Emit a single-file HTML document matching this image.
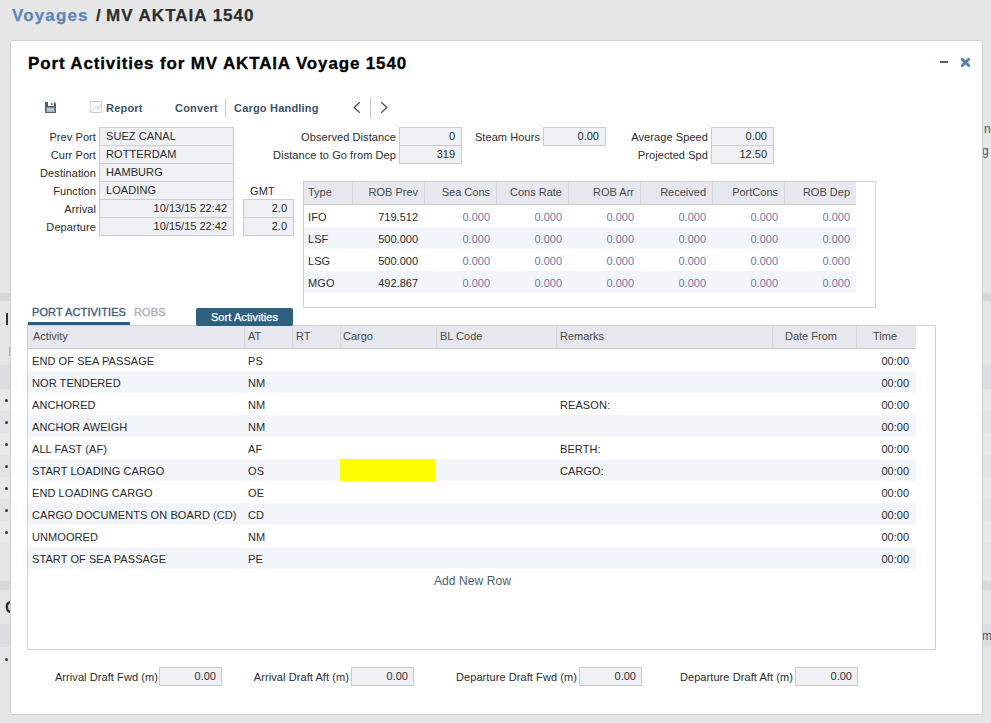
<!DOCTYPE html>
<html><head><meta charset="utf-8"><style>
*{box-sizing:border-box;margin:0;padding:0}
html,body{width:991px;height:723px;overflow:hidden;background:#e6e6e6;font-family:"Liberation Sans",sans-serif;font-size:11px;color:#222}
.t{position:absolute;white-space:nowrap;font-size:11px;line-height:13px;letter-spacing:0.08px}
.rc{position:absolute}
.bx{position:absolute;background:#eff0f3;border:1px solid #cbccce}
.h18{font-size:17px;font-weight:bold;line-height:20px;letter-spacing:0.85px;-webkit-text-stroke:0.25px currentColor}
.tb{font-size:11px;line-height:13px;font-weight:bold;color:#3c5369;letter-spacing:0.2px}
.lb{color:#2b2b2b}
.hd{color:#4a4a4a;letter-spacing:0}
.bl{color:#7476a6;letter-spacing:0}
.n{letter-spacing:0}
</style></head><body>
<div class="rc" style="left:0px;top:293px;width:991px;height:8px;background:#d6d6d9;"></div>
<div class="rc" style="left:0px;top:365px;width:991px;height:24px;background:#dcdce2;"></div>
<div class="rc" style="left:0px;top:389px;width:991px;height:22px;background:#e9e9e9;"></div>
<div class="rc" style="left:0px;top:411px;width:991px;height:22px;background:#e3e3e5;"></div>
<div class="rc" style="left:0px;top:433px;width:991px;height:22px;background:#e9e9e9;"></div>
<div class="rc" style="left:0px;top:455px;width:991px;height:22px;background:#e3e3e5;"></div>
<div class="rc" style="left:0px;top:477px;width:991px;height:22px;background:#e9e9e9;"></div>
<div class="rc" style="left:0px;top:499px;width:991px;height:22px;background:#e3e3e5;"></div>
<div class="rc" style="left:0px;top:521px;width:991px;height:22px;background:#e9e9e9;"></div>
<div class="rc" style="left:0px;top:581px;width:991px;height:9px;background:#d9d9dc;"></div>
<div class="rc" style="left:0px;top:624px;width:991px;height:23px;background:#dcdce2;"></div>
<div class="rc" style="left:6px;top:313px;width:2px;height:12px;background:#333;"></div>
<div class="rc" style="left:9px;top:347px;width:1px;height:9px;background:#aaa;"></div>
<div class="rc" style="left:5px;top:399px;width:3px;height:3px;background:#3a3a3a;border-radius:1.5px"></div>
<div class="rc" style="left:5px;top:421px;width:3px;height:3px;background:#3a3a3a;border-radius:1.5px"></div>
<div class="rc" style="left:5px;top:443px;width:3px;height:3px;background:#3a3a3a;border-radius:1.5px"></div>
<div class="rc" style="left:5px;top:465px;width:3px;height:3px;background:#3a3a3a;border-radius:1.5px"></div>
<div class="rc" style="left:5px;top:487px;width:3px;height:3px;background:#3a3a3a;border-radius:1.5px"></div>
<div class="rc" style="left:5px;top:509px;width:3px;height:3px;background:#3a3a3a;border-radius:1.5px"></div>
<div class="rc" style="left:5px;top:531px;width:3px;height:3px;background:#3a3a3a;border-radius:1.5px"></div>
<div class="rc" style="left:5px;top:658px;width:3px;height:3px;background:#3a3a3a;border-radius:1.5px"></div>
<div class="t " style="left:5px;top:599px;font-size:16px;line-height:18px;color:#2a2a2a;font-weight:bold">C</div>
<div class="t " style="left:984px;top:122px;font-size:12px;line-height:14px;color:#555">ne</div>
<div class="t " style="left:982px;top:144px;font-size:12px;line-height:14px;color:#555">g</div>
<div class="t " style="left:982px;top:629px;font-size:12px;line-height:14px;color:#555">m</div>
<div class="t h18" style="left:12px;top:6px;color:#5b88b6;letter-spacing:1.15px">Voyages</div>
<div class="t h18" style="left:96px;top:6px;color:#2d2d2d">/</div>
<div class="t h18" style="left:106px;top:6px;color:#2d2d2d;letter-spacing:1.0px">MV AKTAIA 1540</div>
<div class="rc" style="left:10px;top:40px;width:973px;height:675px;background:#fff;border:1px solid #cfcfcf;border-radius:3px"></div>
<div class="t h18" style="left:28px;top:54px;color:#000;letter-spacing:0.85px;-webkit-text-stroke:0.3px #000">Port Activities for MV AKTAIA Voyage 1540</div>
<div class="rc" style="left:940px;top:61px;width:8px;height:2px;background:#4d6282;"></div>
<svg style="position:absolute;left:960px;top:57px" width="11" height="11" viewBox="0 0 11 11"><path d="M2.2 2.2L8.8 8.8M8.8 2.2L2.2 8.8" stroke="#4f80b8" stroke-width="2.8" stroke-linecap="round"/></svg>
<svg style="position:absolute;left:45px;top:102px" width="11" height="11" viewBox="0 0 11 11"><path d="M0 0H9.5L11 1.5V11H0Z" fill="#4b6272"/><rect x="3" y="0" width="6" height="4" fill="#fff"/><rect x="6" y="1" width="1.5" height="2" fill="#6a7d8c"/><rect x="1.5" y="5.5" width="8" height="4.5" fill="#a8bccb"/><rect x="2" y="7" width="7" height="0.8" fill="#c6d4df"/></svg>
<svg style="position:absolute;left:90px;top:101px" width="12" height="12" viewBox="0 0 12 12"><rect x="0.5" y="0.5" width="11" height="11" fill="none" stroke="#d8d8d8"/><path d="M0.5 0.5H11.5M0.5 11.5H11.5" stroke="#cdcdcd"/><path d="M1 10.5L3.5 8.5L6.5 5.5L7.8 8.2L11.2 3.5" fill="none" stroke="#c8c8c8" stroke-width="1"/></svg>
<div class="t tb" style="left:106px;top:102px;">Report</div>
<div class="t tb" style="left:175px;top:102px;">Convert</div>
<div class="rc" style="left:225px;top:98px;width:1px;height:20px;background:#c8c8c8;"></div>
<div class="t tb" style="left:234px;top:102px;">Cargo Handling</div>
<svg style="position:absolute;left:352px;top:101px" width="10" height="13" viewBox="0 0 10 13"><path d="M7.8 1.3L2.2 6.5L7.8 11.7" fill="none" stroke="#3b4a5a" stroke-width="1.2"/></svg>
<div class="rc" style="left:370px;top:98px;width:1px;height:20px;background:#c8c8c8;"></div>
<svg style="position:absolute;left:379px;top:101px" width="10" height="13" viewBox="0 0 10 13"><path d="M2.2 1.3L7.8 6.5L2.2 11.7" fill="none" stroke="#3b4a5a" stroke-width="1.2"/></svg>
<div class="t lb" style="left:0px;top:131px;width:96px;text-align:right;">Prev Port</div>
<div class="bx" style="left:99px;top:127px;width:135px;height:19px;"></div>
<div class="t lb" style="left:106px;top:130px;">SUEZ CANAL</div>
<div class="t lb" style="left:0px;top:149px;width:96px;text-align:right;">Curr Port</div>
<div class="bx" style="left:99px;top:145px;width:135px;height:19px;"></div>
<div class="t lb" style="left:106px;top:148px;">ROTTERDAM</div>
<div class="t lb" style="left:0px;top:167px;width:96px;text-align:right;">Destination</div>
<div class="bx" style="left:99px;top:163px;width:135px;height:19px;"></div>
<div class="t lb" style="left:106px;top:166px;">HAMBURG</div>
<div class="t lb" style="left:0px;top:185px;width:96px;text-align:right;">Function</div>
<div class="bx" style="left:99px;top:181px;width:135px;height:19px;"></div>
<div class="t lb" style="left:106px;top:184px;">LOADING</div>
<div class="t lb" style="left:0px;top:203px;width:96px;text-align:right;">Arrival</div>
<div class="bx" style="left:99px;top:199px;width:135px;height:19px;"></div>
<div class="t lb n" style="left:99px;top:202px;width:128px;text-align:right;">10/13/15 22:42</div>
<div class="t lb" style="left:0px;top:221px;width:96px;text-align:right;">Departure</div>
<div class="bx" style="left:99px;top:217px;width:135px;height:19px;"></div>
<div class="t lb n" style="left:99px;top:220px;width:128px;text-align:right;">10/15/15 22:42</div>
<div class="t lb" style="left:250px;top:185px;">GMT</div>
<div class="bx" style="left:243px;top:199px;width:51px;height:19px;"></div>
<div class="t lb n" style="left:243px;top:202px;width:44px;text-align:right;">2.0</div>
<div class="bx" style="left:243px;top:217px;width:51px;height:19px;"></div>
<div class="t lb n" style="left:243px;top:220px;width:44px;text-align:right;">2.0</div>
<div class="t lb" style="left:0px;top:131px;width:396px;text-align:right;">Observed Distance</div>
<div class="bx" style="left:399px;top:127px;width:63px;height:19px;"></div>
<div class="t lb n" style="left:399px;top:130px;width:56px;text-align:right;">0</div>
<div class="t lb" style="left:0px;top:149px;width:396px;text-align:right;">Distance to Go from Dep</div>
<div class="bx" style="left:399px;top:145px;width:63px;height:19px;"></div>
<div class="t lb n" style="left:399px;top:148px;width:56px;text-align:right;">319</div>
<div class="t lb" style="left:0px;top:131px;width:540px;text-align:right;">Steam Hours</div>
<div class="bx" style="left:543px;top:127px;width:63px;height:19px;"></div>
<div class="t lb n" style="left:543px;top:130px;width:56px;text-align:right;">0.00</div>
<div class="t lb" style="left:0px;top:131px;width:708px;text-align:right;">Average Speed</div>
<div class="bx" style="left:711px;top:127px;width:63px;height:19px;"></div>
<div class="t lb n" style="left:711px;top:130px;width:56px;text-align:right;">0.00</div>
<div class="t lb" style="left:0px;top:149px;width:708px;text-align:right;">Projected Spd</div>
<div class="bx" style="left:711px;top:145px;width:63px;height:19px;"></div>
<div class="t lb n" style="left:711px;top:148px;width:56px;text-align:right;">12.50</div>
<div class="rc" style="left:303px;top:181px;width:573px;height:127px;border:1px solid #d2d2d2;background:#fff"></div>
<div class="rc" style="left:304px;top:182px;width:552px;height:23px;background:#e6e7ef;"></div>
<div class="rc" style="left:304px;top:204px;width:552px;height:1px;background:#cbccd2;"></div>
<div class="t hd" style="left:308px;top:186px;">Type</div>
<div class="rc" style="left:352px;top:182px;width:1px;height:22px;background:#d3d5db;"></div>
<div class="t hd" style="left:353px;top:186px;width:65px;text-align:right;">ROB Prev</div>
<div class="rc" style="left:424px;top:182px;width:1px;height:22px;background:#d3d5db;"></div>
<div class="t hd" style="left:425px;top:186px;width:65px;text-align:right;">Sea Cons</div>
<div class="rc" style="left:496px;top:182px;width:1px;height:22px;background:#d3d5db;"></div>
<div class="t hd" style="left:497px;top:186px;width:65px;text-align:right;">Cons Rate</div>
<div class="rc" style="left:568px;top:182px;width:1px;height:22px;background:#d3d5db;"></div>
<div class="t hd" style="left:569px;top:186px;width:65px;text-align:right;">ROB Arr</div>
<div class="rc" style="left:640px;top:182px;width:1px;height:22px;background:#d3d5db;"></div>
<div class="t hd" style="left:641px;top:186px;width:65px;text-align:right;">Received</div>
<div class="rc" style="left:712px;top:182px;width:1px;height:22px;background:#d3d5db;"></div>
<div class="t hd" style="left:713px;top:186px;width:65px;text-align:right;">PortCons</div>
<div class="rc" style="left:784px;top:182px;width:1px;height:22px;background:#d3d5db;"></div>
<div class="t hd" style="left:785px;top:186px;width:65px;text-align:right;">ROB Dep</div>
<div class="t lb" style="left:308px;top:211px;">IFO</div>
<div class="t lb n" style="left:353px;top:211px;width:65px;text-align:right;">719.512</div>
<div class="t bl" style="left:425px;top:211px;width:65px;text-align:right;">0.000</div>
<div class="t bl" style="left:497px;top:211px;width:65px;text-align:right;">0.000</div>
<div class="t bl" style="left:569px;top:211px;width:65px;text-align:right;">0.000</div>
<div class="t bl" style="left:641px;top:211px;width:65px;text-align:right;">0.000</div>
<div class="t bl" style="left:713px;top:211px;width:65px;text-align:right;">0.000</div>
<div class="t bl" style="left:785px;top:211px;width:65px;text-align:right;">0.000</div>
<div class="rc" style="left:304px;top:227px;width:552px;height:22px;background:#f2f5f9;"></div>
<div class="t lb" style="left:308px;top:233px;">LSF</div>
<div class="t lb n" style="left:353px;top:233px;width:65px;text-align:right;">500.000</div>
<div class="t bl" style="left:425px;top:233px;width:65px;text-align:right;">0.000</div>
<div class="t bl" style="left:497px;top:233px;width:65px;text-align:right;">0.000</div>
<div class="t bl" style="left:569px;top:233px;width:65px;text-align:right;">0.000</div>
<div class="t bl" style="left:641px;top:233px;width:65px;text-align:right;">0.000</div>
<div class="t bl" style="left:713px;top:233px;width:65px;text-align:right;">0.000</div>
<div class="t bl" style="left:785px;top:233px;width:65px;text-align:right;">0.000</div>
<div class="t lb" style="left:308px;top:255px;">LSG</div>
<div class="t lb n" style="left:353px;top:255px;width:65px;text-align:right;">500.000</div>
<div class="t bl" style="left:425px;top:255px;width:65px;text-align:right;">0.000</div>
<div class="t bl" style="left:497px;top:255px;width:65px;text-align:right;">0.000</div>
<div class="t bl" style="left:569px;top:255px;width:65px;text-align:right;">0.000</div>
<div class="t bl" style="left:641px;top:255px;width:65px;text-align:right;">0.000</div>
<div class="t bl" style="left:713px;top:255px;width:65px;text-align:right;">0.000</div>
<div class="t bl" style="left:785px;top:255px;width:65px;text-align:right;">0.000</div>
<div class="rc" style="left:304px;top:271px;width:552px;height:22px;background:#f2f5f9;"></div>
<div class="t lb" style="left:308px;top:277px;">MGO</div>
<div class="t lb n" style="left:353px;top:277px;width:65px;text-align:right;">492.867</div>
<div class="t bl" style="left:425px;top:277px;width:65px;text-align:right;">0.000</div>
<div class="t bl" style="left:497px;top:277px;width:65px;text-align:right;">0.000</div>
<div class="t bl" style="left:569px;top:277px;width:65px;text-align:right;">0.000</div>
<div class="t bl" style="left:641px;top:277px;width:65px;text-align:right;">0.000</div>
<div class="t bl" style="left:713px;top:277px;width:65px;text-align:right;">0.000</div>
<div class="t bl" style="left:785px;top:277px;width:65px;text-align:right;">0.000</div>
<div class="t " style="left:32px;top:306px;color:#46607a;-webkit-text-stroke:0.4px #46607a;letter-spacing:0.1px">PORT ACTIVITIES</div>
<div class="t " style="left:134px;top:306px;color:#a9b3bc;-webkit-text-stroke:0.4px #a9b3bc;letter-spacing:0.1px">ROBS</div>
<div class="rc" style="left:28px;top:322px;width:102px;height:3px;background:#2d5a78;"></div>
<div class="rc" style="left:196px;top:308px;width:97px;height:18px;background:#2e6080;border-radius:2px;z-index:2"></div>
<div class="t " style="left:196px;top:311px;color:#fff;width:97px;text-align:center;z-index:3;-webkit-text-stroke:0.25px #fff">Sort Activities</div>
<div class="rc" style="left:27px;top:325px;width:909px;height:325px;border:1px solid #d2d2d2;background:#fff"></div>
<div class="rc" style="left:28px;top:326px;width:888px;height:23px;background:#e6e7ef;"></div>
<div class="rc" style="left:28px;top:348px;width:888px;height:1px;background:#cbccd2;"></div>
<div class="t hd" style="left:33px;top:330px;">Activity</div>
<div class="rc" style="left:244px;top:326px;width:1px;height:22px;background:#d3d5db;"></div>
<div class="t hd" style="left:248px;top:330px;">AT</div>
<div class="rc" style="left:292px;top:326px;width:1px;height:22px;background:#d3d5db;"></div>
<div class="t hd" style="left:296px;top:330px;">RT</div>
<div class="rc" style="left:340px;top:326px;width:1px;height:22px;background:#d3d5db;"></div>
<div class="t hd" style="left:343px;top:330px;">Cargo</div>
<div class="rc" style="left:436px;top:326px;width:1px;height:22px;background:#d3d5db;"></div>
<div class="t hd" style="left:440px;top:330px;">BL Code</div>
<div class="rc" style="left:556px;top:326px;width:1px;height:22px;background:#d3d5db;"></div>
<div class="t hd" style="left:560px;top:330px;">Remarks</div>
<div class="rc" style="left:772px;top:326px;width:1px;height:22px;background:#d3d5db;"></div>
<div class="t hd" style="left:785px;top:330px;">Date From</div>
<div class="rc" style="left:856px;top:326px;width:1px;height:22px;background:#d3d5db;"></div>
<div class="t hd" style="left:873px;top:330px;">Time</div>
<div class="t lb" style="left:32px;top:355px;">END OF SEA PASSAGE</div>
<div class="t lb" style="left:248px;top:355px;">PS</div>
<div class="t lb n" style="left:857px;top:355px;width:52px;text-align:right;">00:00</div>
<div class="rc" style="left:28px;top:371px;width:888px;height:22px;background:#f2f5f9;"></div>
<div class="t lb" style="left:32px;top:377px;">NOR TENDERED</div>
<div class="t lb" style="left:248px;top:377px;">NM</div>
<div class="t lb n" style="left:857px;top:377px;width:52px;text-align:right;">00:00</div>
<div class="t lb" style="left:32px;top:399px;">ANCHORED</div>
<div class="t lb" style="left:248px;top:399px;">NM</div>
<div class="t lb" style="left:560px;top:399px;">REASON:</div>
<div class="t lb n" style="left:857px;top:399px;width:52px;text-align:right;">00:00</div>
<div class="rc" style="left:28px;top:415px;width:888px;height:22px;background:#f2f5f9;"></div>
<div class="t lb" style="left:32px;top:421px;">ANCHOR AWEIGH</div>
<div class="t lb" style="left:248px;top:421px;">NM</div>
<div class="t lb n" style="left:857px;top:421px;width:52px;text-align:right;">00:00</div>
<div class="t lb" style="left:32px;top:443px;">ALL FAST (AF)</div>
<div class="t lb" style="left:248px;top:443px;">AF</div>
<div class="t lb" style="left:560px;top:443px;">BERTH:</div>
<div class="t lb n" style="left:857px;top:443px;width:52px;text-align:right;">00:00</div>
<div class="rc" style="left:28px;top:459px;width:888px;height:22px;background:#f2f5f9;"></div>
<div class="rc" style="left:340px;top:459px;width:96px;height:22px;background:#ffff00;"></div>
<div class="t lb" style="left:32px;top:465px;">START LOADING CARGO</div>
<div class="t lb" style="left:248px;top:465px;">OS</div>
<div class="t lb" style="left:560px;top:465px;">CARGO:</div>
<div class="t lb n" style="left:857px;top:465px;width:52px;text-align:right;">00:00</div>
<div class="t lb" style="left:32px;top:487px;">END LOADING CARGO</div>
<div class="t lb" style="left:248px;top:487px;">OE</div>
<div class="t lb n" style="left:857px;top:487px;width:52px;text-align:right;">00:00</div>
<div class="rc" style="left:28px;top:503px;width:888px;height:22px;background:#f2f5f9;"></div>
<div class="t lb" style="left:32px;top:509px;">CARGO DOCUMENTS ON BOARD (CD)</div>
<div class="t lb" style="left:248px;top:509px;">CD</div>
<div class="t lb n" style="left:857px;top:509px;width:52px;text-align:right;">00:00</div>
<div class="t lb" style="left:32px;top:531px;">UNMOORED</div>
<div class="t lb" style="left:248px;top:531px;">NM</div>
<div class="t lb n" style="left:857px;top:531px;width:52px;text-align:right;">00:00</div>
<div class="rc" style="left:28px;top:547px;width:888px;height:22px;background:#f2f5f9;"></div>
<div class="t lb" style="left:32px;top:553px;">START OF SEA PASSAGE</div>
<div class="t lb" style="left:248px;top:553px;">PE</div>
<div class="t lb n" style="left:857px;top:553px;width:52px;text-align:right;">00:00</div>
<div class="t " style="left:434px;top:574px;font-size:12px;line-height:14px;color:#4b5e70">Add New Row</div>
<div class="t lb" style="left:0px;top:671px;width:158px;text-align:right;">Arrival Draft Fwd (m)</div>
<div class="bx" style="left:159px;top:667px;width:63px;height:19px;"></div>
<div class="t lb n" style="left:159px;top:670px;width:57px;text-align:right;">0.00</div>
<div class="t lb" style="left:0px;top:671px;width:349px;text-align:right;">Arrival Draft Aft (m)</div>
<div class="bx" style="left:351px;top:667px;width:63px;height:19px;"></div>
<div class="t lb n" style="left:351px;top:670px;width:57px;text-align:right;">0.00</div>
<div class="t lb" style="left:0px;top:671px;width:577px;text-align:right;">Departure Draft Fwd (m)</div>
<div class="bx" style="left:579px;top:667px;width:63px;height:19px;"></div>
<div class="t lb n" style="left:579px;top:670px;width:57px;text-align:right;">0.00</div>
<div class="t lb" style="left:0px;top:671px;width:793px;text-align:right;">Departure Draft Aft (m)</div>
<div class="bx" style="left:795px;top:667px;width:63px;height:19px;"></div>
<div class="t lb n" style="left:795px;top:670px;width:57px;text-align:right;">0.00</div>
</body></html>
